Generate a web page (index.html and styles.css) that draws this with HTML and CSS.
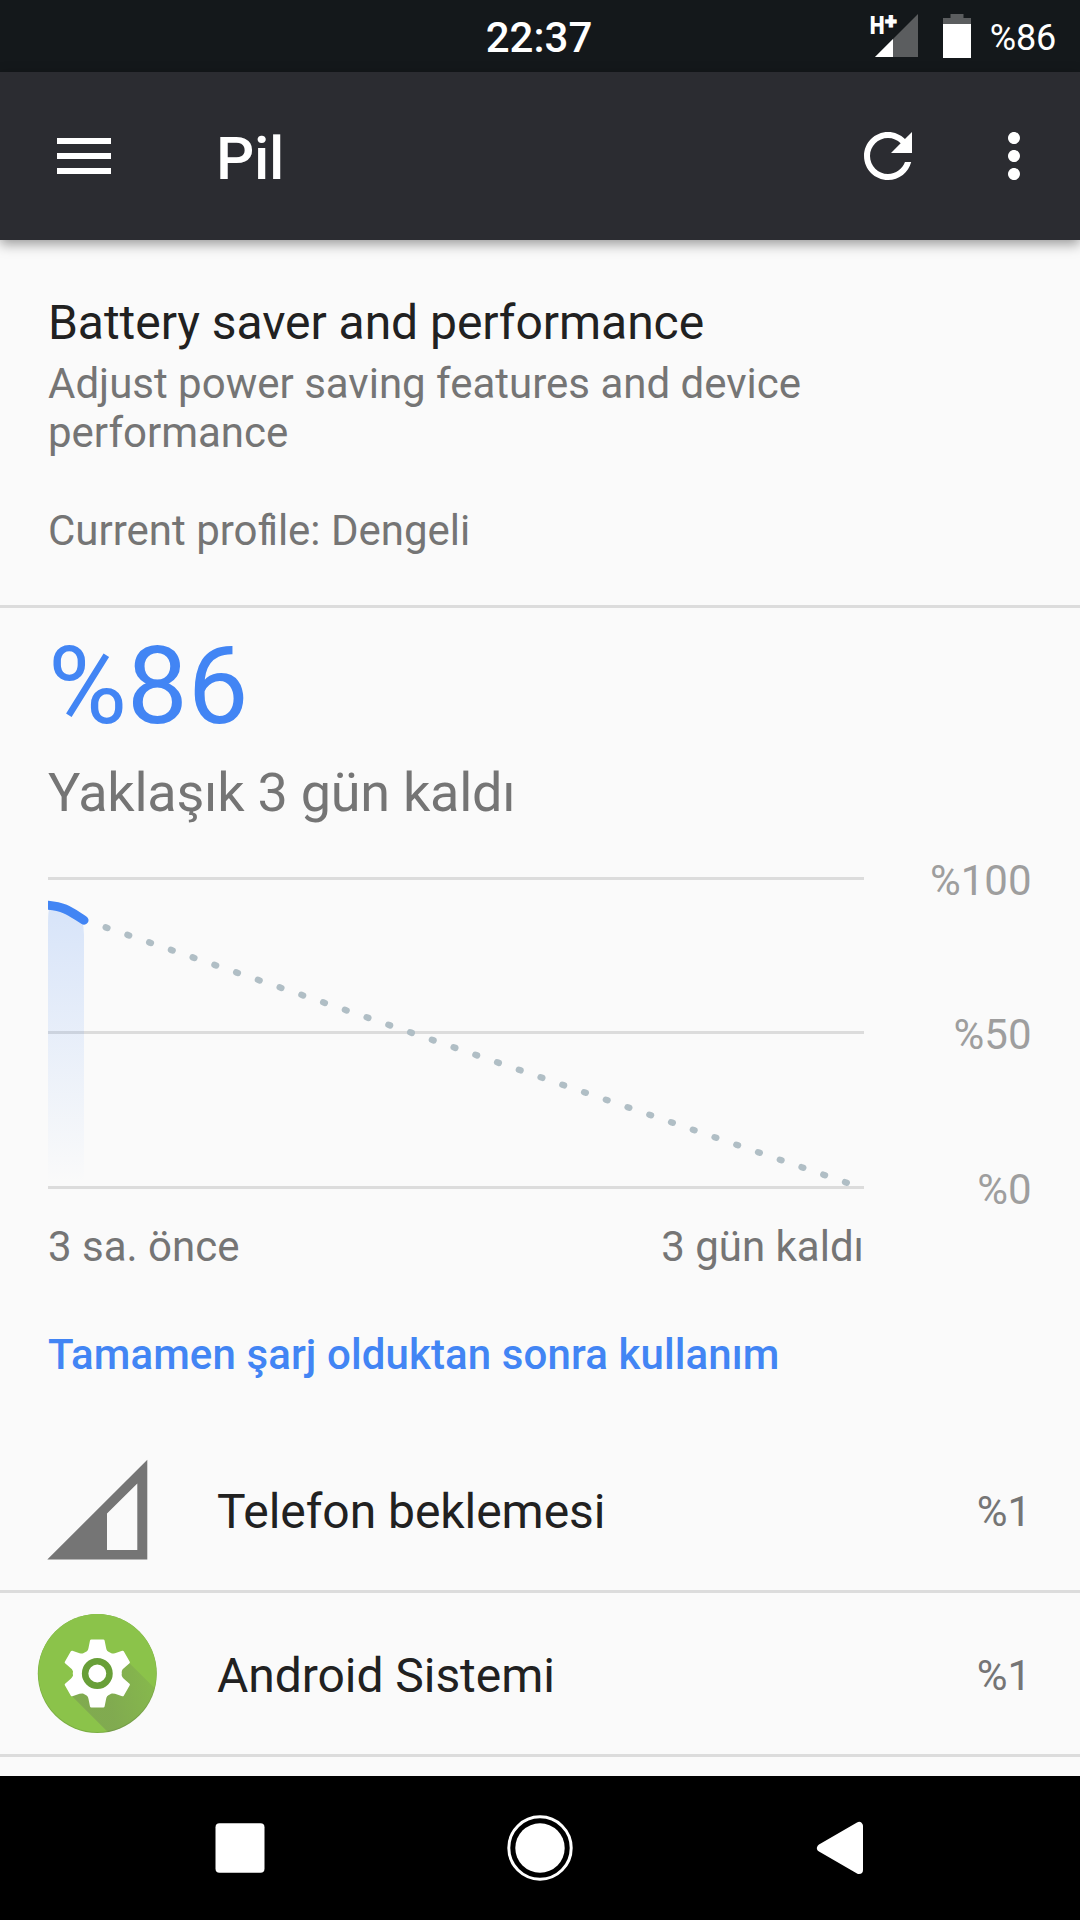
FILE: index.html
```
<!DOCTYPE html>
<html lang="tr">
<head>
    <meta charset="UTF-8">
    <meta name="viewport" content="width=device-width, initial-scale=1.0">
    <title>Pil</title>
    <link rel="stylesheet" href="styles.css">
</head>
<body>
    <!-- Status bar -->
    <div class="status-bar">
        <span class="clock">22:37</span>
        <div class="status-icons">
            <svg class="signal" width="50" height="72" viewBox="870 0 50 72">
                <path d="M918 14V57H875z" fill="#5b5d5f"/>
                <path d="M893 39V57H875z" fill="#fff"/>
                <text class="net-type" x="869.8" y="34" textLength="14.8" lengthAdjust="spacingAndGlyphs">H</text>
                <text class="net-plus" x="884.9" y="29">+</text>
            </svg>
            <svg class="battery" width="28" height="72" viewBox="0 0 28 72">
                <path d="M7.5 14h13v4H28v6H0v-6h7.5z" fill="#5b5d5f"/>
                <path d="M0 24h28v34H0z" fill="#fff"/>
            </svg>
            <span class="status-percent">%86</span>
        </div>
    </div>

    <!-- App bar -->
    <header class="app-bar">
        <svg class="menu-icon" width="54" height="36" viewBox="0 0 54 36">
            <path d="M0 0h54v6H0zM0 15h54v6H0zM0 30h54v6H0z" fill="#fff"/>
        </svg>
        <h1>Pil</h1>
        <svg class="refresh-icon" width="72" height="72" viewBox="0 0 24 24">
            <path d="M17.65 6.35C16.2 4.9 14.21 4 12 4c-4.42 0-7.99 3.58-7.99 8s3.57 8 7.99 8c3.73 0 6.84-2.55 7.73-6h-2.08c-.82 2.33-3.04 4-5.65 4-3.31 0-6-2.69-6-6s2.69-6 6-6c1.66 0 3.14.69 4.22 1.78L13 11h7V4l-2.35 2.35z" fill="#fff"/>
        </svg>
        <svg class="more-icon" width="72" height="72" viewBox="0 0 24 24">
            <path d="M12 8c1.1 0 2-.9 2-2s-.9-2-2-2-2 .9-2 2 .9 2 2 2zm0 2c-1.1 0-2 .9-2 2s.9 2 2 2 2-.9 2-2-.9-2-2-2zm0 6c-1.1 0-2 .9-2 2s.9 2 2 2 2-.9 2-2-.9-2-2-2z" fill="#fff"/>
        </svg>
    </header>

    <main class="content">
        <section class="profile">
            <h2>Battery saver and performance</h2>
            <p>Adjust power saving features and device performance</p>
            <p class="current">Current pro<span class="tight">f</span>ile: Dengeli</p>
        </section>

        <section class="usage">
            <div class="level">%86</div>
            <div class="remaining">Yaklaşık 3 gün kaldı</div>

            <div class="chart">
                <svg class="graph" width="816" height="312" viewBox="0 0 816 312">
                    <defs>
                        <linearGradient id="fade" x1="0" y1="0" x2="0" y2="1">
                            <stop offset="0" stop-color="#4285f4" stop-opacity="0.19"/>
                            <stop offset="1" stop-color="#4285f4" stop-opacity="0"/>
                        </linearGradient>
                    </defs>
                    <path d="M0 0h816v3H0zM0 154h816v3H0zM0 309h816v3H0z" fill="#dcdcdc"/>
                    <path d="M0 46Q0 34 2 28C14 29 22 35 34 43Q36 50 36 58V306H0z" fill="url(#fade)"/>
                    <path class="history" d="M-4 28L0 28.2C18 30 22 34.5 36 43.2"/>
                    <path class="projection" d="M57.7 50.4L799.5 306"/>
                </svg>
                <div class="y-labels">
                    <span>%100</span>
                    <span>%50</span>
                    <span>%0</span>
                </div>
            </div>
            <div class="x-labels">
                <span>3 sa. önce</span>
                <span>3 gün kaldı</span>
            </div>
        </section>

        <h3>Tamamen şarj olduktan sonra kullanım</h3>

        <ul class="app-list">
            <li>
                <svg class="app-icon" width="120" height="120" viewBox="0 0 120 120">
                    <path d="M110.3 9.8V109.5H10.3zM100.3 33.5L70 63.5V100H100.3z" fill="#757575" fill-rule="evenodd"/>
                </svg>
                <span class="name">Telefon beklemesi</span>
                <span class="value">%1</span>
            </li>
            <li>
                <svg class="app-icon" width="120" height="120" viewBox="-60.3 -59.5 120 120">
                    <defs>
                        <linearGradient id="shadow" gradientUnits="userSpaceOnUse" x1="10" y1="20" x2="60" y2="8">
                            <stop offset="0" stop-color="#616161" stop-opacity="0.25"/>
                            <stop offset="1" stop-color="#616161" stop-opacity="0.1"/>
                        </linearGradient>
                        <clipPath id="disc"><circle r="59.5"/></clipPath>
                    </defs>
                    <circle r="59.5" fill="#7bae42"/>
                    <circle cy="-0.6" r="59" fill="#8bc34a"/>
                    <path d="M-26 22L31.5-11L80 37V80H32z" fill="url(#shadow)" clip-path="url(#disc)"/>
                    <g fill="#fff">
                        <circle r="24.5"/>
                        <path id="tooth" d="M-10-22.5Q-9-24-8.8-25.5L-7.3-33Q-7-34-6-34H6Q7-34 7.3-33L8.8-25.5Q9-24 10-22.5L12-18H-12z"/>
                        <use href="#tooth" transform="rotate(60)"/>
                        <use href="#tooth" transform="rotate(120)"/>
                        <use href="#tooth" transform="rotate(180)"/>
                        <use href="#tooth" transform="rotate(240)"/>
                        <use href="#tooth" transform="rotate(300)"/>
                    </g>
                    <circle r="12.2" fill="#fff" stroke="#689f38" stroke-width="6.5"/>
                </svg>
                <span class="name">Android Sistemi</span>
                <span class="value">%1</span>
            </li>
        </ul>
    </main>

    <!-- Navigation bar -->
    <nav class="nav-bar">
        <svg width="72" height="72" viewBox="-36 -36 72 72">
            <rect x="-24.5" y="-24.8" width="49" height="49.5" rx="4" fill="#fff"/>
        </svg>
        <svg width="72" height="72" viewBox="-36 -36 72 72">
            <circle r="31.2" fill="none" stroke="#fff" stroke-width="3"/>
            <circle r="24.7" fill="#fff"/>
        </svg>
        <svg width="72" height="72" viewBox="-36 -36 72 72">
            <path d="M19-22V22L-19 0z" fill="#fff" stroke="#fff" stroke-width="8" stroke-linejoin="round"/>
        </svg>
    </nav>
</body>
</html>
```
FILE: styles.css
```
* {
    box-sizing: border-box;
}
body {
    margin: 0;
    width: 1080px;
    height: 1920px;
    display: flex;
    flex-direction: column;
    overflow: hidden;
    font-family: Roboto, sans-serif;
    font-size: 42px;
    background-color: #fafafa;
    color: #757575;
}
h1, h2, h3, p, ul {
    margin: 0;
    padding: 0;
}
svg {
    display: block;
    flex: none;
}

/* Status bar */
.status-bar {
    height: 72px;
    flex: none;
    display: grid;
    grid-template-columns: 1fr auto 1fr;
    background-color: #14181b;
    color: #fff;
}
.clock {
    grid-column: 2;
    padding-right: 2px;
    font-weight: 500;
    line-height: 76px;
}
.status-icons {
    display: flex;
    justify-content: flex-end;
    padding-right: 24px;
}
.net-type {
    font-size: 26.5px;
    font-weight: 900;
    fill: #fff;
}
.net-plus {
    font-size: 22px;
    font-weight: 900;
    fill: #fff;
    stroke: #fff;
    stroke-width: 0.8px;
}
.battery {
    margin-left: 23px;
}
.status-percent {
    margin-left: 18.5px;
    font-size: 36px;
    line-height: 76px;
    letter-spacing: -0.2px;
}

/* App bar */
.app-bar {
    height: 168px;
    flex: none;
    display: flex;
    align-items: center;
    padding: 0 30px 0 57px;
    background-color: #2b2c31;
    color: #fff;
    box-shadow: 0 4px 12px rgba(0, 0, 0, 0.4);
    z-index: 1;
}
.app-bar h1 {
    margin-left: 105px;
    flex: 1;
    font-size: 60px;
    font-weight: 500;
    line-height: 70px;
    letter-spacing: -0.3px;
    padding-top: 6px;
}
.more-icon {
    margin-left: 54px;
}

.content {
    flex: 1;
    min-height: 0;
    overflow: hidden;
}
.profile {
    height: 368px;
    padding: 55px 240px 0 48px;
    border-bottom: 3px solid #dcdcdc;
}
.profile h2 {
    font-size: 48px;
    font-weight: 400;
    line-height: 56px;
    letter-spacing: -0.05px;
    color: #212121;
}
.profile p {
    line-height: 49px;
    padding-top: 8px;
}
.profile .current {
    padding-top: 49px;
}
.tight {
    letter-spacing: -4.5px;
}

/* Battery level and chart */
.usage {
    padding: 15px 48px 0;
}
.level {
    font-size: 108px;
    line-height: 127px;
    color: #4285f4;
}
.remaining {
    font-size: 54px;
    line-height: 64px;
    letter-spacing: -0.26px;
    padding-top: 11px;
}
.chart {
    display: flex;
    justify-content: space-between;
    margin-top: 52px;
}
.graph {
    overflow: hidden;
}
.history {
    fill: none;
    stroke: #4285f4;
    stroke-width: 9;
    stroke-linecap: round;
}
.projection {
    fill: none;
    stroke: #b0bec5;
    stroke-width: 6.4;
    stroke-linecap: round;
    stroke-dasharray: 1.8 21.2;
}
.y-labels {
    display: flex;
    flex-direction: column;
    justify-content: space-between;
    margin: -21px 0.5px -25.8px 0;
    text-align: right;
    color: #9e9e9e;
    line-height: 50px;
}
.x-labels {
    width: 816px;
    display: flex;
    justify-content: space-between;
    line-height: 50px;
    /* room for the %0 label, which hangs below the graph */
    padding-top: 33px;
}

h3 {
    font-size: 42px;
    font-weight: 500;
    line-height: 50px;
    letter-spacing: 0.1px;
    padding: 58px 48px 49px;
    color: #4285f4;
}

/* App usage rows */
.app-list {
    list-style: none;
}
.app-list li {
    height: 164px;
    display: flex;
    align-items: center;
    padding: 0 49px 0 37px;
    border-bottom: 3px solid #dcdcdc;
}
.name {
    flex: 1;
    margin-left: 60px;
    padding-top: 3px;
    font-size: 48px;
    letter-spacing: -0.05px;
    color: #212121;
}
.value {
    padding-top: 3px;
}

/* Navigation bar */
.nav-bar {
    height: 144px;
    flex: none;
    display: flex;
    align-items: center;
    justify-content: space-between;
    padding: 0 204px;
    background-color: #000;
}
```
